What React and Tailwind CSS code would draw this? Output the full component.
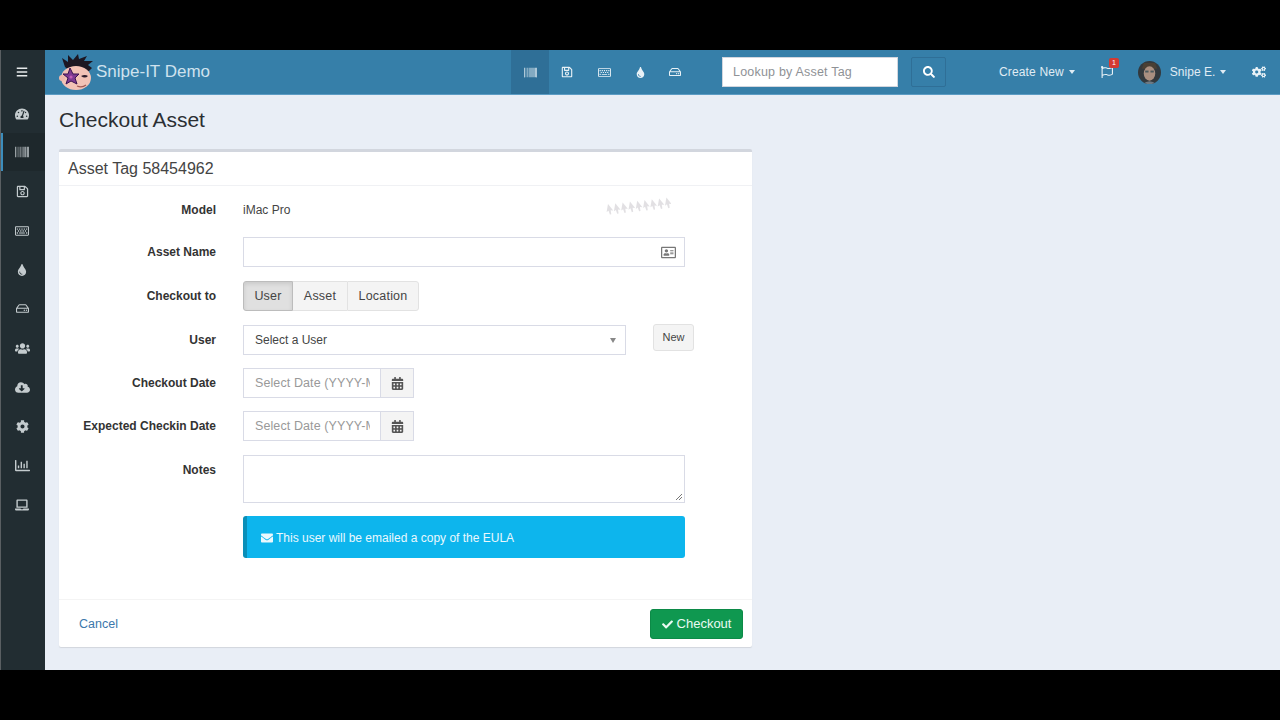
import React from "react";
import { FaBars, FaTachometerAlt, FaBarcode, FaRegSave, FaRegKeyboard, FaTint, FaRegHdd, FaUsers, FaCloudDownloadAlt, FaCog, FaRegChartBar, FaLaptop, FaSearch, FaCogs, FaRegFlag, FaEnvelope, FaCheck, FaRegAddressCard, FaCalendarAlt } from "react-icons/fa";

const font = { fontFamily: '"Liberation Sans", Arial, sans-serif' };

function Logo() {
  return (
    <svg width="36" height="38" viewBox="0 0 36 38" className="shrink-0">
      <path d="M7 14 L4 5 L10 9 L10 2 L15 7 L20 1 L21 6 L29 3 L26 8 L35 8 L30 12 L34 15 L30 19 L12 18Z" fill="#1c1722" />
      <ellipse cx="18" cy="25" rx="15" ry="12" fill="#f2c2b6" />
      <circle cx="4" cy="25" r="3" fill="#eeb8ac" />
      <path d="M12 15 L15 21 L21 21 L17 25 L19 31 L13 28 L8 31 L10 25 L5 21 L10 21Z" fill="#7d3a92" stroke="#3a1350" strokeWidth="1" />
      <circle cx="13" cy="24" r="1.6" fill="#c25bb8" />
      <path d="M23 23 q4 -2 7 0 q-3 3 -7 0Z" fill="#2a1a2a" />
      <path d="M19 33 q5 2 9 -1" stroke="#a05a55" strokeWidth="1.2" fill="none" />
    </svg>
  );
}

function Avatar() {
  return (
    <svg width="23" height="23" viewBox="0 0 24 24" className="shrink-0 rounded-full">
      <rect width="24" height="24" fill="#33393d" />
      <path d="M6 2 h12 l2 6 -3 0 -10 0 -3 0Z" fill="#4a4034" />
      <ellipse cx="12" cy="13" rx="6" ry="7.5" fill="#a98f80" />
      <path d="M5 24 q7 -6 14 0Z" fill="#6d7a84" />
      <rect x="7.5" y="10" width="3.5" height="2" fill="#4d5a5c" />
      <rect x="13" y="10" width="3.5" height="2" fill="#4d5a5c" />
    </svg>
  );
}

function Ghost() {
  const xs = [0, 1, 2, 3, 4, 5, 6, 7, 8];
  return (
    <svg width="66" height="22" viewBox="0 0 66 22" className="ml-auto mr-[81px] -mt-[9px] opacity-60">
      {xs.map((i) => {
        const x = 3 + i * 7.3;
        const y = 9 - i * 0.8;
        return (
          <path key={i} transform={`rotate(-14 ${x} ${y})`} d={`M${x} ${y} l3.5 7.5 -2.4 -.8 -.4 4 -1.4 0 -.4 -4 -2.2 .8Z`} fill="#cfcdd2" />
        );
      })}
    </svg>
  );
}

const sideIcons = [
  [FaRegSave, 13],
  [FaRegKeyboard, 14],
  [FaTint, 12],
  [FaRegHdd, 13],
  [FaUsers, 15],
  [FaCloudDownloadAlt, 15],
  [FaCog, 13],
  [FaRegChartBar, 15],
  [FaLaptop, 14],
];

function Side() {
  return (
    <aside className="w-[45px] shrink-0 bg-[#222d32] border-l border-l-[#5a5f62] flex flex-col text-[#c4cbce]">
      <div className="h-[45px] pb-[2px] flex items-center justify-center text-[#e6e9ea] pr-[2px]"><FaBars size={12} /></div>
      <div className="h-[38px] flex items-center justify-center pr-[2px]"><FaTachometerAlt size={14} /></div>
      <div className="h-[38px] mb-[1px] flex items-center justify-center bg-[#1e282c] border-l-2 border-l-[#3c8dbc] pr-[4px]"><FaBarcode size={14} /></div>
      {sideIcons.map(([I, s], k) => (
        <div key={k} className="h-[39.15px] flex items-center justify-center pr-[2px]"><I size={s} /></div>
      ))}
    </aside>
  );
}

function Header() {
  const navIcons = [
    [FaRegSave, "w-[35px]", 12],
    [FaRegKeyboard, "w-[40px]", 13],
    [FaTint, "w-[33px]", 11],
    [FaRegHdd, "w-[36px]", 12],
  ];
  return (
    <header className="h-[45px] shrink-0 bg-[#367fa9] flex items-center text-[#e8f1f6] border-b border-b-[#5c9cc4]">
      <div className="ml-[13px] flex items-center w-[453px]">
        <Logo />
        <span className="ml-[2px] text-[17px] text-[#cfe2ee]">Snipe-IT Demo</span>
      </div>
      <div className="h-full w-[38px] bg-[#2f6f97] flex items-center justify-center"><FaBarcode size={13} /></div>
      {navIcons.map(([I, w, s], k) => (
        <div key={k} className={`${w} flex items-center justify-center`}><I size={s} /></div>
      ))}
      <div className="ml-[29px] w-[176px] h-[30px] bg-white border border-[#d2d6de] flex items-center pl-[10px] text-[12.5px] tracking-[0.2px] text-[#8f9296]">Lookup by Asset Tag</div>
      <div className="ml-[13px] w-[35px] h-[30px] rounded-[2px] border border-[#2f6f97] flex items-center justify-center text-white"><FaSearch size={12} /></div>
      <span className="ml-[53px] text-[12px] tracking-[0.15px] text-[#e0ecf4]">Create New</span>
      <span className="ml-[5px] border-x-[3.5px] border-x-transparent border-t-[4px] border-t-[#e0ecf4]" />
      <div className="relative ml-[26px] w-[12px] flex justify-center">
        <FaRegFlag size={12} />
        <span className="absolute -top-[8px] left-[8px] w-[10px] h-[10px] rounded-[2px] bg-[#d33a32] text-white text-[7px] leading-[10px] text-center">1</span>
      </div>
      <div className="ml-[25px]"><Avatar /></div>
      <span className="ml-[9px] text-[12px] text-[#e0ecf4]">Snipe E.</span>
      <span className="ml-[5px] border-x-[3.5px] border-x-transparent border-t-[4px] border-t-[#e0ecf4]" />
      <div className="ml-[26px]"><FaCogs size={14} /></div>
    </header>
  );
}

function Row({ label, className = "", labelClass = "", children }) {
  return (
    <div className={`flex items-center ${className}`}>
      <label className={`w-[157px] shrink-0 text-right text-[12px] font-bold text-[#333] ${labelClass}`}>{label}</label>
      <div className="ml-[27px] flex-1 flex items-center min-w-0">{children}</div>
    </div>
  );
}

function DateField() {
  return (
    <div className="flex h-[30px] w-[171px] border border-[#d9dbe6]">
      <div className="w-[136px] pl-[11px] pr-[10px] text-[12.5px] leading-[28px] tracking-[0.1px] text-[#999]">
        <div className="overflow-hidden whitespace-nowrap">Select Date (YYYY-MM-DD)</div>
      </div>
      <div className="flex-1 bg-[#f4f4f4] border-l border-l-[#d9dbe6] flex items-center justify-center text-[#555]"><FaCalendarAlt size={13} /></div>
    </div>
  );
}

function Card() {
  return (
    <section className="mt-[16px] w-[693px] h-[498px] flex flex-col bg-white border-t-[3px] border-t-[#d2d6de] rounded-[2px] shadow-[0_1px_1px_rgba(0,0,0,0.1)]">
      <div className="h-[34px] shrink-0 border-b border-b-[#f0f1f4] flex items-center pl-[9px] text-[16px] text-[#444]">Asset Tag 58454962</div>
      <div className="flex-1 flex flex-col pt-[14px] text-[12px] text-[#444]">
        <Row label="Model" className="h-[20px] leading-[20px]">
          <span>iMac Pro</span>
          <Ghost />
        </Row>
        <Row label="Asset Name" className="mt-[17px] h-[30px]">
          <div className="w-[442px] h-[30px] border border-[#d9dbe6] flex items-center justify-end pr-[8px] text-[#777]"><FaRegAddressCard size={15} /></div>
        </Row>
        <Row label="Checkout to" className="mt-[14px] h-[30px]">
          <div className="flex h-[30px] text-[12.5px] tracking-[0.2px] text-[#444]">
            <div className="w-[50px] flex items-center justify-center bg-[#e0e0e0] border border-[#bcbcbc] rounded-l-[3px] shadow-[inset_0_2px_4px_rgba(0,0,0,0.1)]">User</div>
            <div className="w-[54px] flex items-center justify-center bg-[#f4f4f4] border-y border-[#e2e2e2]">Asset</div>
            <div className="w-[72px] flex items-center justify-center bg-[#f4f4f4] border border-[#e2e2e2] rounded-r-[3px]">Location</div>
          </div>
        </Row>
        <Row label="User" className="mt-[14px] h-[30px]">
          <div className="w-[383px] h-[30px] border border-[#d9dbe6] flex items-center pl-[11px] pr-[9px] text-[12px]">
            <span>Select a User</span>
            <span className="ml-auto border-x-[3.5px] border-x-transparent border-t-[5px] border-t-[#888]" />
          </div>
          <button className="ml-[27px] -mt-[6px] w-[41px] h-[27px] bg-[#f4f4f4] border border-[#e2e2e2] rounded-[3px] text-[11px] text-[#444]">New</button>
        </Row>
        <Row label="Checkout Date" className="mt-[13px] h-[30px]"><DateField /></Row>
        <Row label="Expected Checkin Date" className="mt-[13px] h-[30px]"><DateField /></Row>
        <Row label="Notes" className="mt-[14px] h-[48px] !items-start" labelClass="pt-[6px]">
          <div className="relative w-[442px] h-[48px] border border-[#d9dbe6]">
            <svg width="8" height="8" viewBox="0 0 8 8" className="absolute right-[1px] bottom-[1px]"><path d="M7 1 L1 7 M7 4 L4 7" stroke="#777" strokeWidth="1" /></svg>
          </div>
        </Row>
        <div className="ml-[184px] mt-[13px] w-[442px] h-[42px] pt-[1px] bg-[#0db5ed] border-l-[4px] border-l-[#0a8fb8] rounded-[3px] flex items-center pl-[14px] text-[12px] text-[#eaf8fd]">
          <FaEnvelope size={12} className="mr-[3px]" /> This user will be emailed a copy of the EULA
        </div>
      </div>
      <div className="h-[48px] shrink-0 border-t border-t-[#f4f4f4] flex items-center justify-between pt-[1px] pl-[20px] pr-[9px]">
        <span className="text-[12.5px] text-[#3c78ab]">Cancel</span>
        <button className="w-[93px] h-[30px] rounded-[3px] bg-[#0f9850] border border-[#0c8a47] text-[#eafaf2] text-[13px] flex items-center justify-center gap-[4px]"><FaCheck size={11} />Checkout</button>
      </div>
    </section>
  );
}

export default function App() {
  return (
    <div className="w-[1280px] h-[720px] bg-black flex flex-col overflow-hidden" style={font}>
      <div className="h-[50px] shrink-0" />
      <div className="h-[620px] shrink-0 flex">
        <Side />
        <div className="flex-1 flex flex-col min-w-0 bg-[#e9eef6]">
          <Header />
          <main className="pl-[14px]">
            <h1 className="mt-[12px] text-[21px] leading-[26px] text-[#2b2f33]">Checkout Asset</h1>
            <Card />
          </main>
        </div>
      </div>
      <div className="h-[50px] shrink-0" />
    </div>
  );
}
